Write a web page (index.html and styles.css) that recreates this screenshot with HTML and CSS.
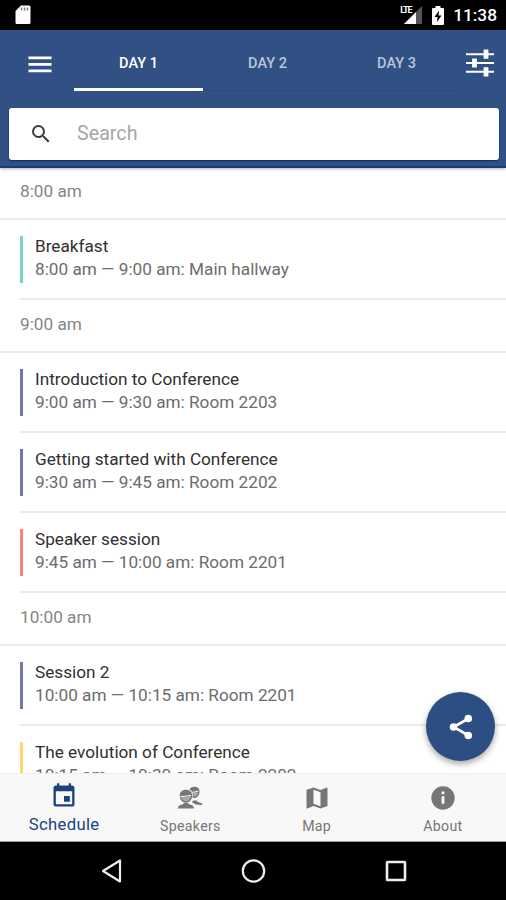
FILE: index.html
```html
<!DOCTYPE html>
<html lang="en">
<head>
<meta charset="utf-8">
<title>Schedule</title>
<link rel="stylesheet" href="styles.css">
</head>
<body>
<div class="phone">
  <div class="status">
    <svg class="sd" width="16" height="20" viewBox="0 0 16 20"><path d="M6 .5h8a1.500 1.500 0 0 1 1.500 1.500v15.500a1.500 1.500 0 0 1-1.500 1.500H2A1.500 1.500 0 0 1 .5 17.500V6z" fill="#fff"/><path d="M6.500 2.500v3M9.500 2.500v3M12.500 2.500v3" stroke="#777" stroke-width="1.500"/></svg>
    <div class="signal">
      <span class="lte">LTE</span>
      <svg width="18" height="18" viewBox="0 0 18 18"><path d="M18 0v18H0z" fill="#555"/><path d="M12 6v12H0z" fill="#fff"/></svg>
    </div>
    <svg class="battery" width="12" height="19" viewBox="0 0 12 19"><path d="M3.500 0h5v2H11a1 1 0 0 1 1 1v15a1 1 0 0 1-1 1H1a1 1 0 0 1-1-1V3a1 1 0 0 1 1-1h2.500z" fill="#fff"/><path d="M7 4.500 2.500 11H5.500L5 16l4.500-6.500H6.500z" fill="#000"/></svg>
    <span class="clock">11:38</span>
  </div>
  <header class="header">
    <div class="toolbar">
      <svg class="menu" width="24" height="18" viewBox="0 0 24 18"><path d="M.5 2.800h23M.5 9.300h23M.5 15.800h23" stroke="#fff" stroke-width="2.700"/></svg>
      <nav class="tabs">
        <a class="tab tab-on">DAY 1</a>
        <a class="tab">DAY 2</a>
        <a class="tab">DAY 3</a>
      </nav>
      <svg class="options" width="30" height="30" viewBox="0 0 30 30"><path d="M1 5.200h28M1 14h28M1 22.800h28" stroke="#fff" stroke-width="2"/><path d="M21 .6v9.200M9.500 9.400v9.200M21 18.200v9.200" stroke="#fff" stroke-width="4.800"/></svg>
    </div>
    <div class="search">
      <svg width="24" height="24" viewBox="0 0 24 24"><path fill="#3c3c3c" d="M15.500 14h-.79l-.28-.27A6.471 6.471 0 0 0 16 9.500 6.500 6.500 0 1 0 9.500 16c1.610 0 3.090-.59 4.230-1.570l.27.28v.79l5 4.990L20.490 19l-4.990-5zm-6 0C7.010 14 5 11.990 5 9.500S7.010 5 9.500 5 14 7.010 14 9.500 11.990 14 9.500 14z"/></svg>
      <span>Search</span>
    </div>
  </header>
  <main class="list">
    <h2 class="time">8:00 am</h2>
    <div class="item"><div class="session teal"><p class="name">Breakfast</p><p class="info">8:00 am — 9:00 am: Main hallway</p></div></div>
    <h2 class="time">9:00 am</h2>
    <div class="item"><div class="session slate"><p class="name">Introduction to Conference</p><p class="info">9:00 am — 9:30 am: Room 2203</p></div></div>
    <div class="item"><div class="session slate"><p class="name">Getting started with Conference</p><p class="info">9:30 am — 9:45 am: Room 2202</p></div></div>
    <div class="item"><div class="session red"><p class="name">Speaker session</p><p class="info">9:45 am — 10:00 am: Room 2201</p></div></div>
    <h2 class="time">10:00 am</h2>
    <div class="item"><div class="session slate"><p class="name">Session 2</p><p class="info">10:00 am — 10:15 am: Room 2201</p></div></div>
    <div class="item"><div class="session yellow"><p class="name">The evolution of Conference</p><p class="info">10:15 am — 10:30 am: Room 2202</p></div></div>
    <div class="fab">
      <svg width="24" height="26" viewBox="0 0 24 26"><path d="M19.500 4.500 4.500 13l15 8.500" fill="none" stroke="#fff" stroke-width="2.600"/><circle cx="4.500" cy="13" r="3.800" fill="#fff"/><circle cx="19.300" cy="4.500" r="3.800" fill="#fff"/><circle cx="19.300" cy="21.500" r="3.800" fill="#fff"/></svg>
    </div>
  </main>
  <nav class="bottom">
    <a class="link link-on">
      <svg width="28" height="28" viewBox="0 0 24 24"><path fill="currentColor" d="M17 12h-5v5h5v-5zM16 1v2H8V1H6v2H5c-1.110 0-1.990.9-1.990 2L3 19a2 2 0 0 0 2 2h14c1.100 0 2-.9 2-2V5c0-1.100-.9-2-2-2h-1V1h-2zm3 18H5V8h14v11z"/></svg>
      <span>Schedule</span>
    </a>
    <a class="link">
      <svg width="28" height="28" viewBox="0 0 28 28"><path fill="currentColor" d="M13.500 5.500c.8-2 2.700-2.800 4.900-2.800 3.300 0 5.500 2 5.100 5.600-.4 3.400-2.500 5.700-5.100 5.700-.8 0-1.300-.2-2-.6 1-3.200.3-6.400-2.900-7.900zM19.500 20.500c-1-.9-2-1.500-3.500-2l1-2h4c-.2.800.3 1.200 2 1.700 2.400.6 3.300 1.200 3.400 2.800z"/><path fill="currentColor" d="M2 24.500c.2-2.300 1-3.100 3.300-3.800 2.300-.7 2.700-1 2.500-2h4.400c-.2 1 .2 1.300 2.500 2 2.300.7 3.100 1.500 3.300 3.800z"/><path fill="currentColor" d="M3.800 12.200C3.300 8 6.300 5.800 9.900 5.800s6.700 2.200 6.200 6.400c-.5 4-2.900 6.400-6.200 6.400s-5.700-2.400-6.100-6.400z"/><path d="M5 12.700c3.700.4 7.200-.2 9.800-1-.3 3.400-2.300 5.600-4.900 5.600s-4.500-1.900-4.900-4.600z" fill="#a9a9a9"/><path d="M4.300 12.300c3.700.4 7.700-.2 10.800-1M16 8.200c2.500.1 4.500-.4 6.300-1.200" fill="none" stroke="#f0f0f0" stroke-width="1.100"/><path d="M17 9c2 0 3.800-.4 5.200-1.100-.3 2.700-1.800 4.600-4.500 4.900-.2-1.400-.3-2.500-.7-3.800z" fill="#a9a9a9"/></svg>
      <span>Speakers</span>
    </a>
    <a class="link">
      <svg width="28" height="28" viewBox="0 0 24 24"><path fill="currentColor" d="M20.500 3l-.16.030L15 5.100 9 3 3.360 4.900c-.21.070-.36.250-.36.480V20.500c0 .28.220.5.5.5l.16-.030L9 18.900l6 2.100 5.640-1.900c.21-.070.36-.250.36-.480V3.500c0-.28-.22-.5-.5-.5zM15 19l-6-2.110V5l6 2.110V19z"/></svg>
      <span>Map</span>
    </a>
    <a class="link">
      <svg width="28" height="28" viewBox="0 0 24 24"><path fill="currentColor" d="M12 2a10 10 0 1 0 0 20 10 10 0 0 0 0-20zm1.200 15h-2.400v-6.500h2.400V17zm0-8.200h-2.400V6.500h2.400v2.300z"/></svg>
      <span>About</span>
    </a>
  </nav>
  <div class="system">
    <svg width="24" height="26" viewBox="0 0 24 26"><path d="M21 2.500v21L4 13z" fill="none" stroke="#eee" stroke-width="2.200" stroke-linejoin="round"/></svg>
    <svg width="26" height="26" viewBox="0 0 26 26"><circle cx="12.500" cy="13" r="10.700" fill="none" stroke="#eee" stroke-width="2.200"/></svg>
    <svg width="24" height="24" viewBox="0 0 24 24"><rect x="3" y="3" width="18" height="18" rx=".5" fill="none" stroke="#eee" stroke-width="2.600"/></svg>
  </div>
</div>
</body>
</html>
```
FILE: styles.css
```css
* { box-sizing: border-box; }

body {
  margin: 0;
  font-family: Roboto, "Liberation Sans", sans-serif;
}

.phone {
  display: flex;
  flex-direction: column;
  width: 506px;
  height: 900px;
  overflow: hidden;
  background: #fff;
}

.status {
  display: flex;
  flex: none;
  align-items: center;
  height: 30px;
  padding: 0 9px 0 15px;
  background: #000;
  color: #fff;
}

.sd { margin-right: auto; }

.signal {
  display: flex;
  position: relative;
  width: 22px;
  margin-right: 10px;
  justify-content: flex-end;
}

.lte {
  position: absolute;
  top: 0;
  left: 0;
  font-size: 9px;
  line-height: 8px;
  font-weight: 700;
  letter-spacing: -1.1px;
}

.battery { margin-right: 9px; }

.clock {
  font-size: 17.3px;
  font-weight: 500;
  line-height: 32px;
}

.header {
  flex: none;
  height: 138px;
  background: #315184;
  border-bottom: 2px solid #163e77;
  position: relative;
  box-shadow: 0 1px 3px rgba(0, 0, 0, 0.3);
}

.toolbar {
  display: flex;
  align-items: center;
  height: 68px;
  padding: 0 11px 0 28px;
}

.menu { margin-right: 22px; }

.tabs {
  display: flex;
  width: 387px;
}

.tab {
  flex: 1;
  height: 53px;
  border-bottom: 1px solid #2b4a7b;
  color: #b9c5d9;
  font-size: 14.5px;
  font-weight: 500;
  line-height: 52px;
  text-align: center;
}

.tab-on {
  border-bottom: 3px solid #fff;
  color: #fff;
}

.options { margin-left: 4px; }

.search {
  display: flex;
  align-items: center;
  height: 52px;
  margin: 9.5px 7px 0 9px;
  padding-left: 20px;
  gap: 24px;
  border-radius: 3px;
  background: #fff;
  box-shadow: 0 1px 2px rgba(0, 25, 75, 0.7);
  color: #a6a6a6;
  font-size: 19.7px;
}

.list {
  flex: 1;
  min-height: 0;
  overflow: hidden;
}

.time {
  height: 53px;
  margin: 0;
  padding-left: 20px;
  border-bottom: 2px solid #ebebeb;
  color: #858585;
  font-size: 17.2px;
  font-weight: 400;
  line-height: 49px;
}

.time:first-child {
  height: 52px;
  line-height: 47px;
}

.item {
  height: 80px;
  margin-left: 20px;
  padding-top: 16px;
  border-bottom: 2px solid #ebebeb;
}

.session {
  height: 47px;
  padding-left: 12px;
  border-left: 3px solid;
}

.teal { border-color: #78d3cc; }
.slate { border-color: #737aa0; }
.red { border-color: #fa7f82; }
.yellow { border-color: #ffd66b; }

.name,
.info {
  margin: 0;
  color: #303030;
  font-size: 17.2px;
  white-space: nowrap;
}

.name { line-height: 21px; }

.info {
  color: #6c6c6c;
  line-height: 25px;
}

.fab {
  display: flex;
  position: absolute;
  top: 692px;
  left: 426px;
  width: 69px;
  height: 69px;
  align-items: center;
  justify-content: center;
  border-radius: 50%;
  background: #2d4e82;
  box-shadow: 0 3px 6px rgba(0, 0, 0, 0.35);
}

.bottom {
  display: flex;
  flex: none;
  height: 69px;
  padding-top: 10px;
  padding-left: 1px;
  background: #f8f8f8;
  border-top: 1px solid #efefef;
  border-bottom: 1px solid #999;
}

.link {
  display: flex;
  flex: 1;
  flex-direction: column;
  align-items: center;
  color: #767676;
  font-size: 14.2px;
  line-height: 20px;
}

.link span { margin-top: 4px; letter-spacing: 0.3px; }

.link-on {
  margin-top: -2px;
  color: #1c427c;
  font-size: 16.7px;
}

.link-on span {
  margin-top: 5px;
}

.system {
  display: flex;
  flex: none;
  align-items: center;
  justify-content: space-between;
  height: 58px;
  padding: 0 98px 0 99px;
  background: #000;
}
```
